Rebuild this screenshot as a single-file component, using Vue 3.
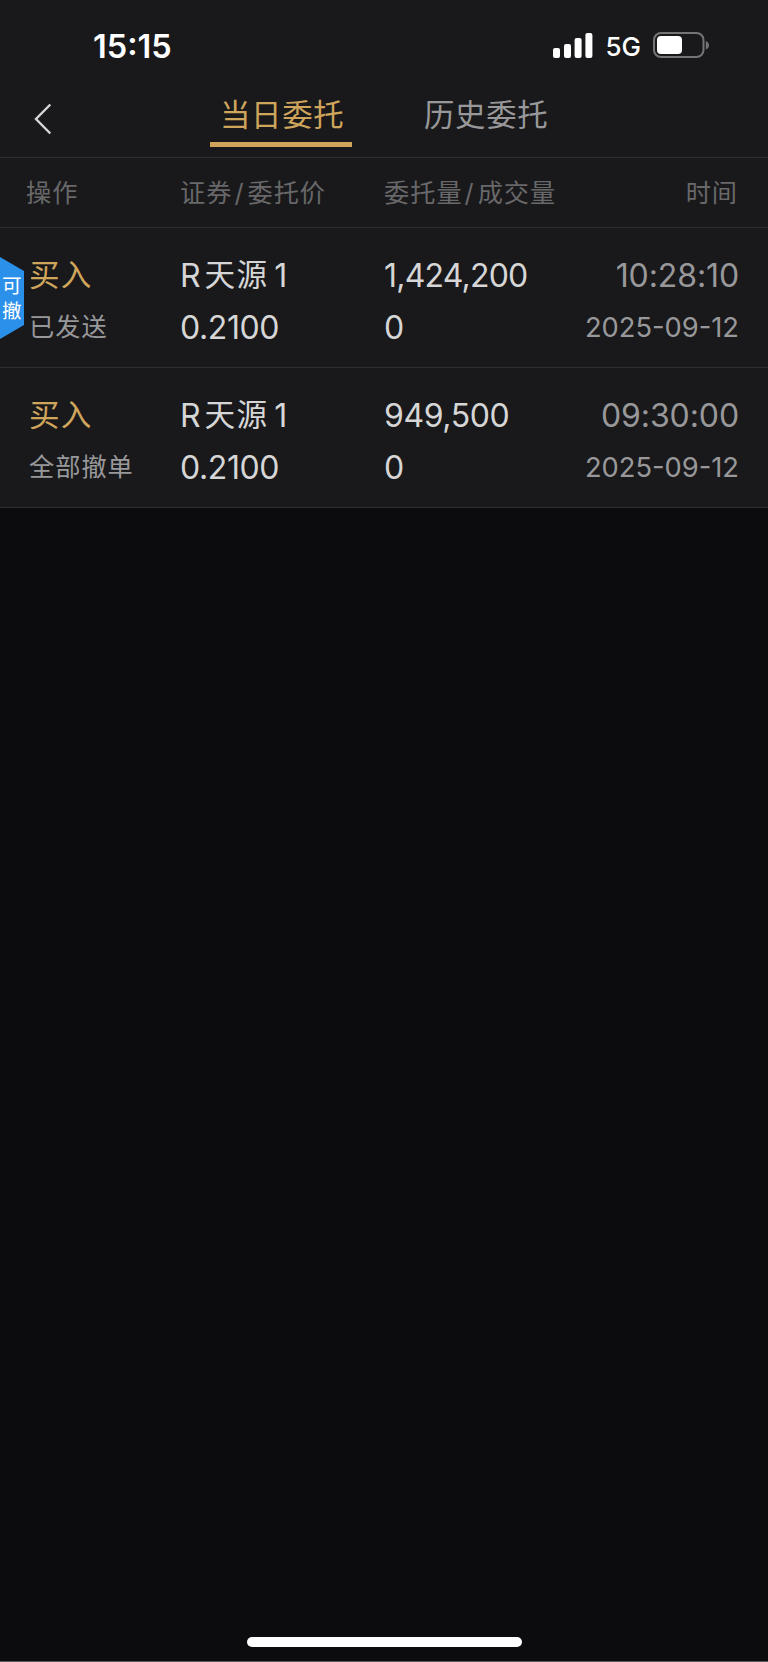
<template>
  <div class="page">
    <!-- 状态栏 -->
    <div class="status-bar">
      <span class="clock">15:15</span>
      <div class="status-right">
        <svg class="signal" width="40" height="26" viewBox="0 0 40 26">
          <rect x="0" y="15" width="7" height="10" rx="2" />
          <rect x="11" y="11" width="7" height="14" rx="2" />
          <rect x="21.6" y="5" width="7" height="20" rx="2" />
          <rect x="32.4" y="0" width="7" height="25" rx="2" />
        </svg>
        <span class="network">5G</span>
        <svg class="battery" width="57" height="26" viewBox="0 0 57 26">
          <rect x="1" y="1" width="49.5" height="24" rx="7" fill="none" stroke="#747475" stroke-width="2" />
          <rect x="4" y="4" width="25" height="18" rx="4" fill="#fff" />
          <path d="M52.8 9v8.6q3.2-1.3 3.2-4.3T52.8 9z" fill="#747475" />
        </svg>
      </div>
    </div>

    <!-- 顶部导航 -->
    <div class="nav">
      <svg class="back" width="18" height="32" viewBox="0 0 18 32" @click="active = 0">
        <path d="M16.3 1.5L2 16l14.3 14.5" fill="none" stroke="#d6d6d7" stroke-width="2.4" />
      </svg>
      <div class="tabs">
        <div v-for="(tab, i) in tabs" :key="tab" :class="['tab', { active: active === i }]" @click="active = i">
          {{ tab }}
        </div>
      </div>
    </div>

    <!-- 表头 -->
    <div class="grid table-head">
      <span>操作</span>
      <span>证券<i>/</i>委托价</span>
      <span>委托量<i>/</i>成交量</span>
      <span class="right">时间</span>
    </div>

    <!-- 委托列表 -->
    <div v-for="item in orders" :key="item.time" class="grid order">
      <div v-if="item.cancelable" class="badge"><span>可</span><span>撤</span></div>
      <div class="cell action">
        <span class="type">{{ item.type }}</span>
        <span class="state">{{ item.state }}</span>
      </div>
      <div class="cell">
        <span class="name"><b>R</b><em>天源</em><b>1</b></span>
        <span class="num">{{ item.price }}</span>
      </div>
      <div class="cell">
        <span :class="['num', { long: item.amount.length > 7 }]">{{ item.amount }}</span>
        <span class="num">{{ item.deal }}</span>
      </div>
      <div class="cell right">
        <span class="time">{{ item.time }}</span>
        <span class="date">{{ item.date }}</span>
      </div>
    </div>

    <div class="home-bar"></div>
  </div>
</template>

<script setup>
import { ref } from 'vue';

const tabs = ['当日委托', '历史委托']
const active = ref(0)

const orders = [
  { type: '买入', state: '已发送', price: '0.2100', amount: '1,424,200', deal: '0', time: '10:28:10', date: '2025-09-12', cancelable: true },
  { type: '买入', state: '全部撤单', price: '0.2100', amount: '949,500', deal: '0', time: '09:30:00', date: '2025-09-12', cancelable: false }
]
</script>

<style>
body {
  background: #0c0c0e;
}
</style>

<style scoped>
.page {
  display: flex;
  flex-direction: column;
  box-sizing: border-box;
  height: 1662px;
  background: #0c0c0e;
  border-bottom: 1px solid #59595b;
  font-family: Inter, "Noto Sans CJK SC", sans-serif;
  color: #d6d6d7;
  white-space: nowrap;
}

.status-bar {
  display: flex;
  justify-content: space-between;
  height: 92px;
  padding: 0 58px 0 93px;
  background: #19191b;
  color: #fff;
}

.clock {
  font-size: 32.5px;
  font-weight: 600;
  line-height: 40px;
  margin-top: 27px;
}

.status-right {
  display: flex;
  align-items: flex-start;
}

.signal {
  margin-top: 33px;
  fill: #fff;
}

.network {
  margin: 30px 12px 0 12px;
  font-size: 26px;
  font-weight: 500;
  line-height: 34px;
}

.battery {
  margin-top: 32px;
}

.nav {
  display: flex;
  height: 65px;
  background: #19191b;
  border-bottom: 1px solid #2f2f31;
}

.back {
  margin: 11px 0 0 34px;
}

.tabs {
  display: flex;
  margin-left: 158px;
  gap: 62px;
}

.tab {
  box-sizing: border-box;
  width: 142px;
  height: 55px;
  padding-left: 10px;
  font-size: 30.4px;
  letter-spacing: 0.7px;
  line-height: 46px;
  color: #98989a;
  border-bottom: 5px solid transparent;
}

.tab.active {
  color: #cfa55b;
  border-bottom-color: #cfa55b;
}

.grid {
  display: grid;
  grid-template-columns: 154px 204px 1fr 180px;
  box-sizing: border-box;
  padding: 0 30px 0 26px;
  background: #19191b;
  border-bottom: 1px solid #2f2f31;
}

.table-head {
  height: 70px;
  font-size: 25.2px;
  letter-spacing: 1px;
  line-height: 71px;
  color: #68686a;
}

.table-head i {
  font-style: normal;
  margin: 0 3px 0 2px;
}

.right {
  text-align: right;
}

.order {
  position: relative;
  height: 140px;
}

.cell {
  display: flex;
  flex-direction: column;
  padding-top: 22px;
}

.cell.right {
  margin-right: -1px;
}

.cell span {
  height: 52px;
  line-height: 52px;
}

.action {
  padding-left: 3px;
}

.cell .type {
  font-size: 30.6px;
  letter-spacing: 1.2px;
  line-height: 50px;
  color: #cfa55b;
}

.cell .state {
  font-size: 25.2px;
  letter-spacing: 1px;
  line-height: 50px;
  color: #98989a;
}

.name {
  display: flex;
}

.name b {
  font-size: 32px;
  font-weight: 400;
}

.name em {
  font-size: 30.6px;
  font-style: normal;
  letter-spacing: 1.2px;
  line-height: 50px;
  margin: 0 6px 0 4px;
}

.num,
.time {
  font-size: 32px;
  letter-spacing: -0.4px;
}

.num.long {
  letter-spacing: -0.8px;
}

.time {
  letter-spacing: -0.1px;
}

.time,
.date {
  color: #98989a;
}

.date {
  font-size: 27.3px;
}

.badge {
  position: absolute;
  left: 0;
  top: 29px;
  display: flex;
  flex-direction: column;
  box-sizing: border-box;
  width: 24px;
  height: 82px;
  padding: 17px 0 0 2px;
  background: #2b90ea;
  clip-path: polygon(0 0, 100% 14px, 100% 68px, 0 100%);
  font-size: 19.5px;
  line-height: 25px;
  color: #fff;
}

.home-bar {
  width: 275px;
  height: 10px;
  margin: auto auto 14px 247px;
  border-radius: 5px;
  background: #fff;
}
</style>
